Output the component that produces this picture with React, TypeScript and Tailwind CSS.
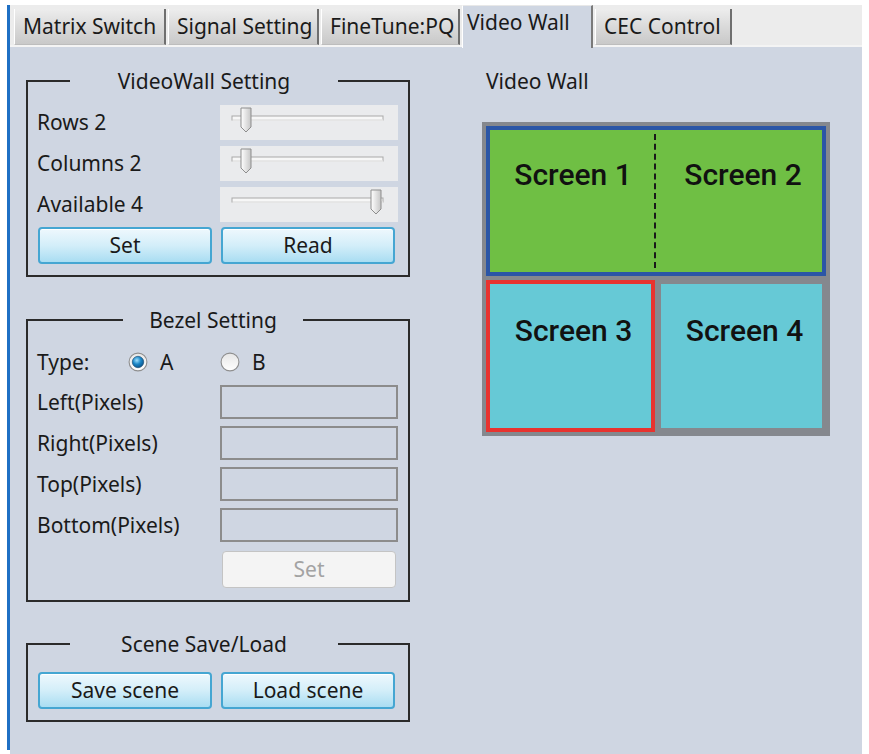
import React from "react";

const font = { fontFamily: '"Noto Sans", "Open Sans", sans-serif' };

function Tab({ label, active, w }: { label: string; active?: boolean; w: string }) {
  if (active) {
    return (
      <div
        className={`${w} h-[43px] -mb-[3px] bg-[#cfd6e2] border-l border-l-white border-r-2 border-r-[#7a7a7a] border-t border-t-[#e8e8e8] pl-[4px] pt-[1px] text-[21px] leading-[30px] text-[#1a1a1a] z-10`}
      >
        {label}
      </div>
    );
  }
  return (
    <div
      className={`${w} h-[36px] bg-gradient-to-b from-[#ededed] via-[#dadada] to-[#c9c9c9] border-l border-l-white border-r-2 border-r-[#6f6f6f] border-b border-b-[#bdbdbd] pl-[8px] text-[21px] leading-[35px] text-[#1a1a1a] whitespace-nowrap overflow-hidden`}
    >
      {label}
    </div>
  );
}

function Slider({ pos }: { pos: number }) {
  return (
    <div className="w-[178px] h-[35px] bg-[#eaebed]">
      <svg width="178" height="35" viewBox="0 0 178 35">
        <rect x="12" y="11" width="151" height="4" fill="#f7f7f7" stroke="#a9a9a9" strokeWidth="1" />
        <line x1="12.5" y1="15" x2="163" y2="15" stroke="#ffffff" />
        <defs>
          <linearGradient id={`th${pos}`} x1="0" x2="1" y1="0" y2="0">
            <stop offset="0" stopColor="#ffffff" />
            <stop offset="1" stopColor="#c6c6c6" />
          </linearGradient>
        </defs>
        <path
          d={`M${pos} 3 h10 v19 l-5 5 l-5 -5 z`}
          fill={`url(#th${pos})`}
          stroke="#8d8d8d"
          strokeWidth="1"
        />
      </svg>
    </div>
  );
}

function BlueButton({ label }: { label: string }) {
  return (
    <button className="w-[174px] h-[37px] rounded-[4px] border-2 border-[#45a6d2] bg-gradient-to-b from-[#eef8fd] via-[#d3eef9] to-[#a9ddf2] text-[21px] text-[#1a1a1a] leading-none shadow-[inset_0_1px_0_#ffffff]">
      {label}
    </button>
  );
}

function Radio({ checked }: { checked?: boolean }) {
  return (
    <svg width="20" height="20" viewBox="0 0 22 22">
      <defs>
        <radialGradient id="rg" cx="0.4" cy="0.35" r="0.7">
          <stop offset="0" stopColor="#9fe0ff" />
          <stop offset="0.5" stopColor="#1b86c6" />
          <stop offset="1" stopColor="#0a4f86" />
        </radialGradient>
        <linearGradient id="rb" x1="0" x2="0" y1="0" y2="1">
          <stop offset="0" stopColor="#e6e6e6" />
          <stop offset="1" stopColor="#ffffff" />
        </linearGradient>
      </defs>
      <circle cx="11" cy="11" r="9.8" fill="url(#rb)" stroke="#8f8f8f" strokeWidth="1.2" />
      {checked && <circle cx="11" cy="11" r="6.3" fill="url(#rg)" stroke="#0d3f66" strokeWidth="0.6" />}
    </svg>
  );
}

function Group({
  title,
  ml,
  lw,
  children,
  className,
}: {
  title: string;
  ml: string;
  lw: string;
  children: React.ReactNode;
  className?: string;
}) {
  return (
    <fieldset className={`w-[384px] border-2 border-[#2b2b2b] px-[9px] ${className ?? ""}`}>
      <legend className={`${ml} ${lw} h-[26px]`}>
        <span className="block text-center text-[21px] leading-[26px] text-[#1a1a1a]">{title}</span>
      </legend>
      {children}
    </fieldset>
  );
}

function Row({ label, h, children }: { label: string; h: string; children: React.ReactNode }) {
  return (
    <div className={`flex items-center justify-between ${h} pr-[1px]`}>
      <span className="text-[21px] text-[#1a1a1a] leading-none">{label}</span>
      {children}
    </div>
  );
}

function Field() {
  return <div className="w-[178px] h-[34px] border-2 border-[#8c8c8c] bg-[#cfd6e2]" />;
}

export default function App() {
  return (
    <div className="w-[869px] h-[754px] bg-white flex pt-[5px] pl-[7px]" style={font}>
      <div className="w-[3px] h-[745px] bg-[#1f70c4]" />
      <div className="w-[852px] flex flex-col">
        <div className="h-[42px] bg-[#ececec] flex items-end pl-[4px] gap-[2px] border-b-2 border-b-[#f4f4f4]">
          <Tab label="Matrix Switch" w="w-[152px]" />
          <Tab label="Signal Setting" w="w-[151px]" />
          <Tab label="FineTune:PQ" w="w-[139px]" />
          <Tab label="Video Wall" w="w-[131px]" active />
          <Tab label="CEC Control" w="w-[137px]" />
        </div>
        <div className="flex-1 bg-[#cfd6e2] flex pl-[16px]">
          <div className="flex flex-col pt-[21px]">
            <Group title="VideoWall Setting" ml="ml-[33px]" lw="w-[268px]" className="pb-[11px]">
              <div className="flex flex-col gap-[6px] pt-[11px]">
                <Row label="Rows 2" h="h-[35px]">
                  <Slider pos={21} />
                </Row>
                <Row label="Columns 2" h="h-[35px]">
                  <Slider pos={21} />
                </Row>
                <Row label="Available 4" h="h-[35px]">
                  <Slider pos={151} />
                </Row>
              </div>
              <div className="flex gap-[9px] mt-[5px] pl-[1px]">
                <BlueButton label="Set" />
                <BlueButton label="Read" />
              </div>
            </Group>

            <Group title="Bezel Setting" ml="ml-[86px]" lw="w-[180px]" className="mt-[30px] pb-[12px]">
              <div className="flex items-center h-[32px] mt-[13px] text-[21px] text-[#1a1a1a] leading-none">
                <span className="w-[91px]">Type:</span>
                <Radio checked />
                <span className="ml-[12px] w-[60px]">A</span>
                <Radio />
                <span className="ml-[12px]">B</span>
              </div>
              <div className="flex flex-col gap-[7px] mt-[7px]">
                <Row label="Left(Pixels)" h="h-[34px]">
                  <Field />
                </Row>
                <Row label="Right(Pixels)" h="h-[34px]">
                  <Field />
                </Row>
                <Row label="Top(Pixels)" h="h-[34px]">
                  <Field />
                </Row>
                <Row label="Bottom(Pixels)" h="h-[34px]">
                  <Field />
                </Row>
              </div>
              <div className="flex justify-end pr-[3px] mt-[9px]">
                <button className="w-[174px] h-[37px] rounded-[4px] border border-[#c4c4c4] bg-[#f4f4f4] text-[21px] text-[#a3a3a3] leading-none">
                  Set
                </button>
              </div>
            </Group>

            <Group title="Scene Save/Load" ml="ml-[33px]" lw="w-[268px]" className="mt-[29px] pb-[11px]">
              <div className="flex gap-[9px] mt-[15px] pl-[1px]">
                <BlueButton label="Save scene" />
                <BlueButton label="Load scene" />
              </div>
            </Group>
          </div>

          <div className="ml-[72px] pt-[21px] flex flex-col">
            <div className="text-[21px] leading-[26px] text-[#1a1a1a] pl-[4px]">Video Wall</div>
            <div
              className="mt-[28px] w-[348px] h-[314px] bg-[#85888e] p-[4px] flex flex-col gap-[4px] text-[30px] font-medium leading-[36px] text-[#111]"
              style={{ fontFamily: 'Roboto, "Noto Sans", sans-serif' }}
            >
              <div className="h-[150px] border-[4px] border-[#2b56a6] bg-[#6fbf44] grid grid-cols-2 py-[4px]">
                <div className="border-r-2 border-dashed border-[#1a1a1a] text-center pt-[23px] pl-[2px]">Screen 1</div>
                <div className="text-center pt-[23px] pl-[8px]">Screen 2</div>
              </div>
              <div className="flex-1 grid grid-cols-2 gap-[2px]">
                <div className="border-[4px] border-[#e8332f] bg-[#66c9d6] text-center pt-[29px] pl-[6px]">Screen 3</div>
                <div className="border-[4px] border-[#85888e] bg-[#66c9d6] text-center pt-[29px] pl-[6px]">Screen 4</div>
              </div>
            </div>
          </div>
        </div>
      </div>
    </div>
  );
}
